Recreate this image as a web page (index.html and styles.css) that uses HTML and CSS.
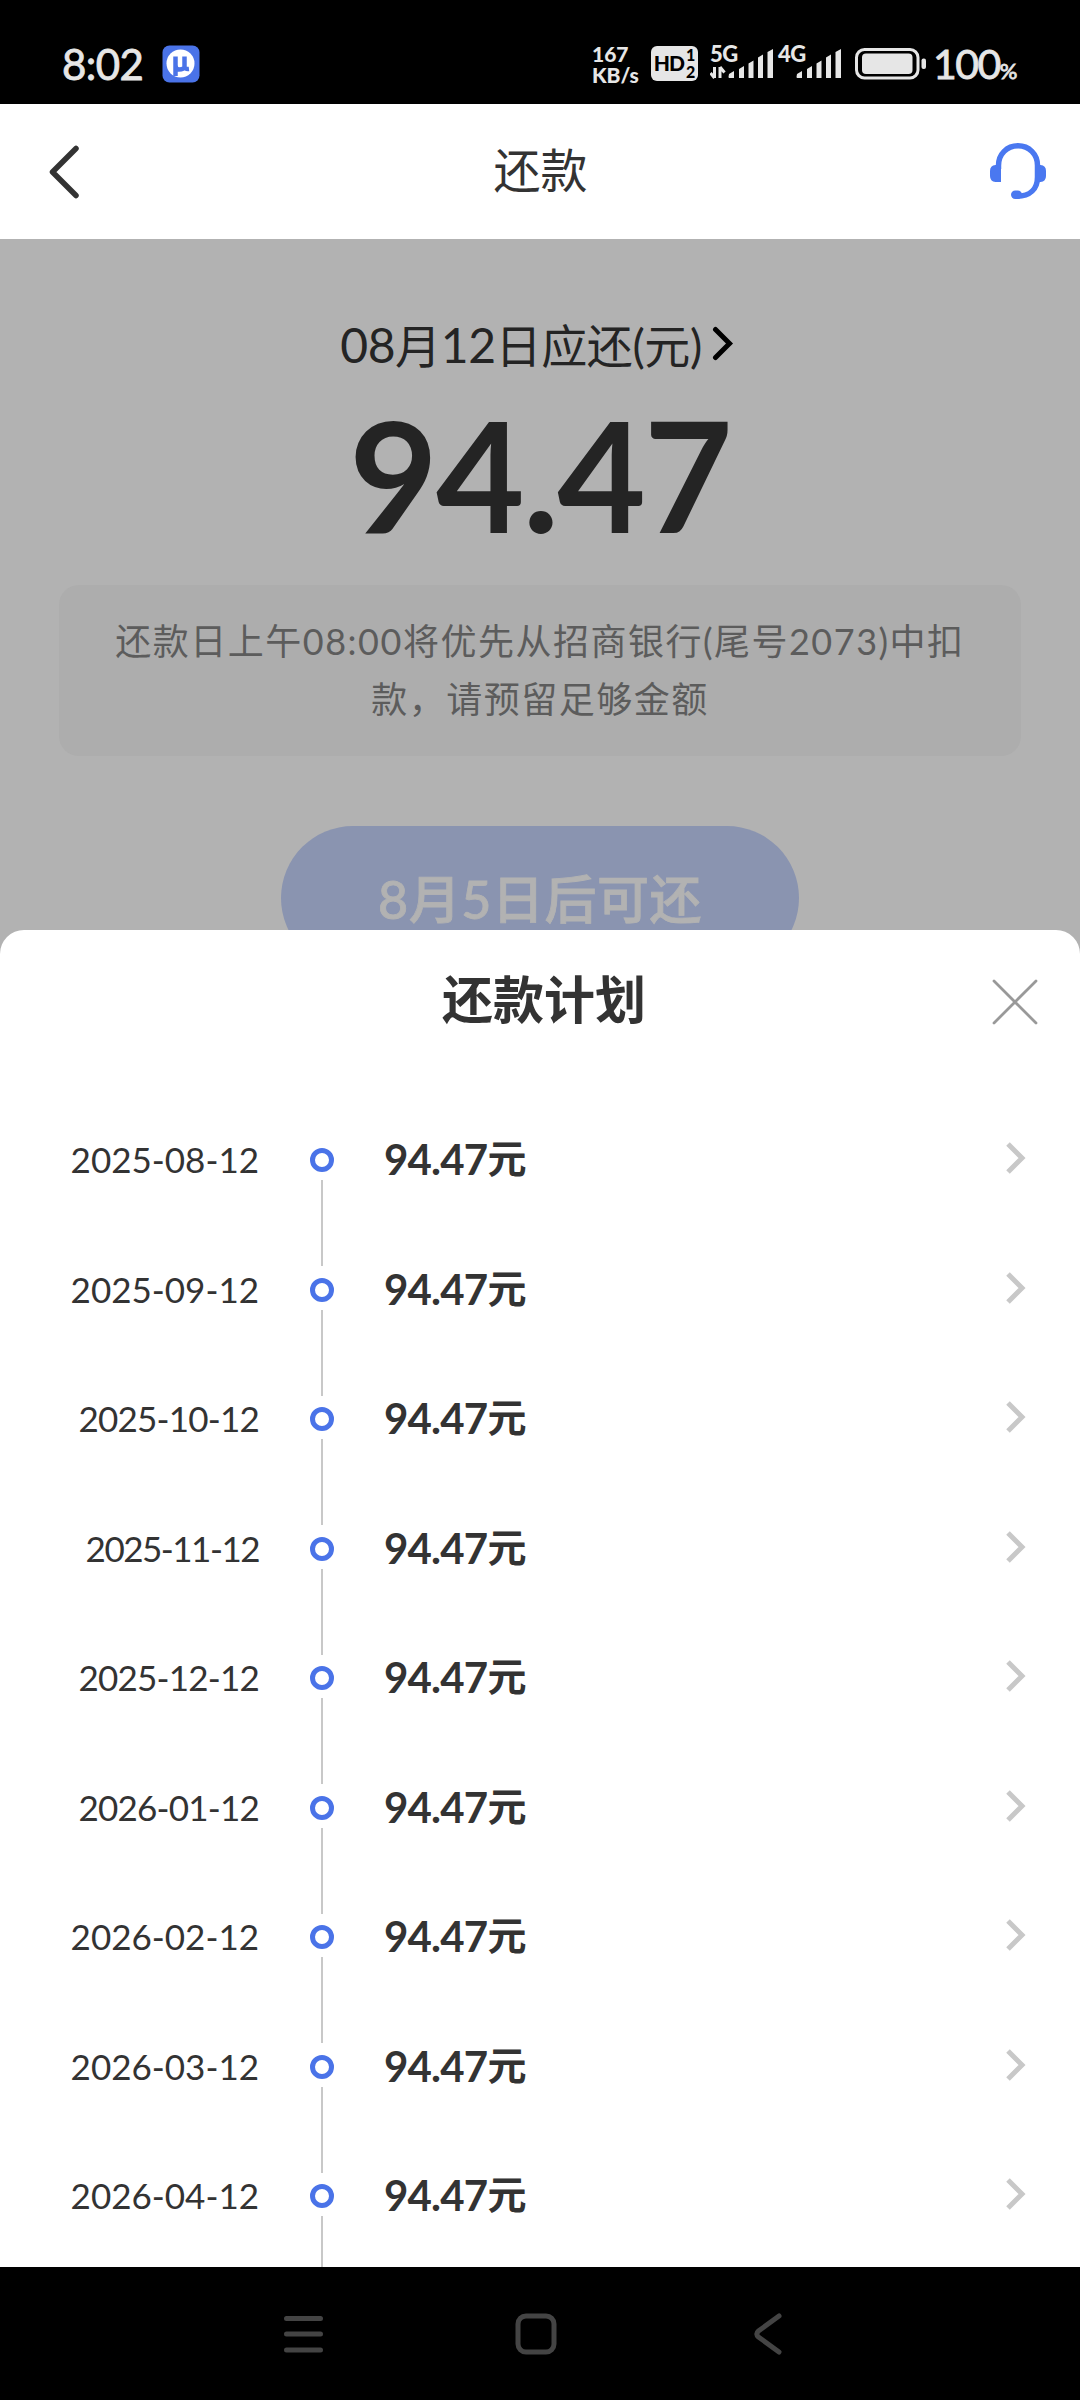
FILE: index.html
```html
<!DOCTYPE html>
<html lang="zh-CN">

<head>
  <meta charset="UTF-8">
  <title>还款</title>
  <link rel="stylesheet" href="styles.css">
</head>

<body>
  <div class="phone">
    <div class="status-bar">
      <div class="time">8:02</div>
      <svg class="app-icon" width="38" height="38" viewBox="0 0 38 38">
        <rect x="0.5" y="0.5" width="37" height="37" rx="7" fill="#4a73e8" />
        <circle cx="18.5" cy="18.5" r="14" fill="#fff" />
        <path d="M13.500 11.500V31M13.500 20Q13.500 24.500 17 24.500Q21.500 24.500 22.500 22M22.500 11.500V21Q22.500 24.500 27 24" fill="none" stroke="#4a73e8" stroke-width="4.500" />
      </svg>
      <div class="speed">
        <div>167</div>
        <div>KB/s</div>
      </div>
      <div class="hd">
        <div class="hd-text">HD</div>
        <div class="hd-num">
          <div>1</div>
          <div>2</div>
        </div>
      </div>
      <div class="signal">
        <div class="net">5G</div>
        <svg width="65" height="36" viewBox="0 0 65 36" fill="#e6e6e6">
          <path d="M4.500 22V33M4.500 33L0.500 28M10 33V22M10 22L14.500 27.500" fill="none" stroke="#e6e6e6" stroke-width="3" />
          <path d="M19 29l5-3v7h-4.500q-1 0-1-1zM29 24l5-3v12h-5zM38.500 18.500l5-3v17.500h-5zM48 12.500l5-3v23.500h-5zM57.500 7l5.500-3v29h-5.500z" />
        </svg>
      </div>
      <div class="signal signal-2">
        <div class="net">4G</div>
        <svg width="65" height="36" viewBox="0 0 65 36" fill="#e6e6e6">
          <path d="M19 29l5-3v7h-4.500q-1 0-1-1zM29 24l5-3v12h-5zM38.500 18.500l5-3v17.500h-5zM48 12.500l5-3v23.500h-5zM57.500 7l5.500-3v29h-5.500z" />
        </svg>
      </div>
      <svg class="battery" width="72" height="32" viewBox="0 0 72 32">
        <rect x="1.500" y="1.500" width="61.500" height="28.500" rx="8" fill="none" stroke="#e6e6e6" stroke-width="3" />
        <rect x="7" y="5.500" width="50.500" height="20.500" rx="4" fill="#e6e6e6" />
        <rect x="66.500" y="10.500" width="4.500" height="10.500" rx="2" fill="#e6e6e6" />
      </svg>
      <div class="percent">100<span>%</span></div>
    </div>

    <div class="header">
      <svg class="back" width="36" height="56" viewBox="0 0 36 56">
        <path d="M31 4.500L7.500 28L31 51.500" fill="none" stroke="#333" stroke-width="5.500" stroke-linecap="round" stroke-linejoin="round" />
      </svg>
      <div class="header-title">还款</div>
      <svg class="service" width="56" height="56" viewBox="0 0 56 56">
        <path d="M8.500 26V22.500C8.500 11 17 2.800 28 2.800S47.500 11 47.500 22.500V34C47.500 46 40 53.200 27 53.200" fill="none" stroke="#4a78f0" stroke-width="5.500" />
        <path d="M11 22V39H5.500Q0 38.500 0 33V28Q0 22.500 5.500 22zM45 22H50.500Q56 22.500 56 28V33Q56 38.500 50.500 39H45z" fill="#4a78f0" />
        <rect x="21" y="47.500" width="11" height="8.500" rx="4.200" fill="#4a78f0" />
      </svg>
    </div>

    <div class="content">
      <div class="due">
        <div class="due-text"><b>08</b>月<b>12</b>日应还(元)</div>
        <svg width="22" height="36" viewBox="0 0 22 36">
          <path d="M3.500 3.500L17.500 17.500L3.500 31.500" fill="none" stroke="#000" stroke-width="5" stroke-linecap="round" />
        </svg>
      </div>
      <div class="total">94.47</div>
      <div class="notice">还款日上午08:00将优先从招商银行(尾号2073)中扣<br>款，请预留足够金额</div>
      <div class="pay-btn">8月5日后可还</div>
    </div>

    <div class="sheet">
      <div class="sheet-header">
        <div class="sheet-title">还款计划</div>
        <svg class="close" width="46" height="46" viewBox="0 0 46 46">
          <path d="M2 2L44 44M44 2L2 44" stroke="#999" stroke-width="2.800" stroke-linecap="round" />
        </svg>
      </div>
      <div class="plan">
        <div class="item">
          <div class="date">2025-08-12</div>
          <div class="track"></div>
          <div class="amount">94.47<span>元</span></div>
          <svg class="arrow" viewBox="0 0 20 32"><path d="M2 2L16 16L2 30" /></svg>
        </div>
        <div class="item">
          <div class="date">2025-09-12</div>
          <div class="track"></div>
          <div class="amount">94.47<span>元</span></div>
          <svg class="arrow" viewBox="0 0 20 32"><path d="M2 2L16 16L2 30" /></svg>
        </div>
        <div class="item">
          <div class="date tight">2025-10-12</div>
          <div class="track"></div>
          <div class="amount">94.47<span>元</span></div>
          <svg class="arrow" viewBox="0 0 20 32"><path d="M2 2L16 16L2 30" /></svg>
        </div>
        <div class="item">
          <div class="date tighter">2025-11-12</div>
          <div class="track"></div>
          <div class="amount">94.47<span>元</span></div>
          <svg class="arrow" viewBox="0 0 20 32"><path d="M2 2L16 16L2 30" /></svg>
        </div>
        <div class="item">
          <div class="date tight">2025-12-12</div>
          <div class="track"></div>
          <div class="amount">94.47<span>元</span></div>
          <svg class="arrow" viewBox="0 0 20 32"><path d="M2 2L16 16L2 30" /></svg>
        </div>
        <div class="item">
          <div class="date tight">2026-01-12</div>
          <div class="track"></div>
          <div class="amount">94.47<span>元</span></div>
          <svg class="arrow" viewBox="0 0 20 32"><path d="M2 2L16 16L2 30" /></svg>
        </div>
        <div class="item">
          <div class="date">2026-02-12</div>
          <div class="track"></div>
          <div class="amount">94.47<span>元</span></div>
          <svg class="arrow" viewBox="0 0 20 32"><path d="M2 2L16 16L2 30" /></svg>
        </div>
        <div class="item">
          <div class="date">2026-03-12</div>
          <div class="track"></div>
          <div class="amount">94.47<span>元</span></div>
          <svg class="arrow" viewBox="0 0 20 32"><path d="M2 2L16 16L2 30" /></svg>
        </div>
        <div class="item">
          <div class="date">2026-04-12</div>
          <div class="track"></div>
          <div class="amount">94.47<span>元</span></div>
          <svg class="arrow" viewBox="0 0 20 32"><path d="M2 2L16 16L2 30" /></svg>
        </div>
      </div>
    </div>

    <div class="nav-bar">
      <svg width="42" height="42" viewBox="0 0 42 42">
        <path d="M3.500 5.500H37.500M3.500 21H37.500M3.500 37H37.500" />
      </svg>
      <svg width="42" height="42" viewBox="0 0 42 42">
        <rect x="3" y="3" width="36" height="36" rx="8" />
      </svg>
      <svg width="42" height="42" viewBox="0 0 42 42">
        <path d="M32 3L11.500 18Q8 21 11.500 24L32 39" />
      </svg>
    </div>
  </div>
</body>

</html>
```
FILE: styles.css
```css
body {
  margin: 0;
  font-family: Lato, "Noto Sans CJK SC", sans-serif;
  color: #333;
}

svg {
  display: block;
  flex-shrink: 0;
}

.phone {
  width: 1080px;
  height: 2400px;
  display: flex;
  flex-direction: column;
  overflow: hidden;
  background: #b2b2b2;
}

/* status bar */
.status-bar {
  height: 104px;
  box-sizing: border-box;
  padding: 45px 0 0 62px;
  display: flex;
  align-items: flex-start;
  flex-shrink: 0;
  background: #000;
  color: #e6e6e6;
}

.time {
  width: 100px;
  font-size: 42px;
  line-height: 38px;
  letter-spacing: -0.6px;
  -webkit-text-stroke: 0.8px #e6e6e6;
}

.speed {
  width: 59px;
  margin-left: 392px;
  font-size: 21px;
  font-weight: 900;
  line-height: 21px;
  margin-top: -2px;
}

.hd {
  width: 47px;
  height: 35px;
  margin-top: 1px;
  border-radius: 6px;
  background: #e6e6e6;
  color: #000;
  display: flex;
  justify-content: center;
  font-weight: 900;
}

.hd-text {
  font-size: 21px;
  line-height: 34px;
  letter-spacing: -1px;
}

.hd-num {
  margin-left: 2px;
  font-size: 16px;
  line-height: 17px;
}

.signal {
  width: 65px;
  height: 36px;
  margin-left: 12px;
  display: grid;
}

.signal > * {
  grid-area: 1 / 1;
}

.net {
  font-size: 22px;
  font-weight: 900;
  line-height: 17px;
  letter-spacing: -0.5px;
}

.signal-2 {
  margin-left: 3px;
}

.battery {
  margin: 3px 0 0 12px;
}

.percent {
  margin-left: 6px;
  font-size: 41px;
  line-height: 38px;
  letter-spacing: -1.5px;
  white-space: nowrap;
  -webkit-text-stroke: 0.8px #e6e6e6;
}

.percent span {
  font-size: 22px;
  letter-spacing: 0;
}

/* header */
.header {
  height: 135px;
  box-sizing: border-box;
  padding: 0 34px 0 46px;
  display: flex;
  align-items: center;
  justify-content: space-between;
  flex-shrink: 0;
  background: #fff;
}

.back {
  margin-right: 10px;
  margin-left: -1px;
}

.header-title {
  padding-bottom: 4px;
  font-size: 47px;
  line-height: 60px;
}

.service {
  margin-top: -1px;
}

/* dimmed page */
.content {
  height: 691px;
  flex-shrink: 0;
  overflow: hidden;
  color: #242424;
}

.due {
  height: 60px;
  margin-top: 76px;
  padding-right: 6px;
  display: flex;
  align-items: center;
  justify-content: center;
  gap: 10px;
}

.due svg {
  margin-top: -3px;
}

.due-text {
  font-size: 46px;
  line-height: 60px;
  letter-spacing: -0.4px;
}

.due-text b {
  font-weight: 400;
  font-size: 48px;
}

.total {
  height: 150px;
  margin-top: 24px;
  font-size: 153px;
  font-weight: 700;
  line-height: 150px;
  letter-spacing: -2px;
  text-align: center;
}

.notice {
  width: 962px;
  height: 171px;
  box-sizing: border-box;
  margin: 36px auto 0;
  padding-top: 27px;
  border-radius: 20px;
  background: #adadad;
  color: #5c5c5c;
  font-size: 36px;
  line-height: 58px;
  letter-spacing: 1.5px;
  text-align: center;
  white-space: nowrap;
}

.pay-btn {
  width: 518px;
  height: 144px;
  margin: 70px auto 0;
  border-radius: 72px;
  background: #8a94b0;
  color: #b2b2b2;
  font-size: 52px;
  font-weight: 500;
  line-height: 147px;
  letter-spacing: 0.5px;
  text-align: center;
  -webkit-text-stroke: 0.8px #b2b2b2;
}

/* bottom sheet */
.sheet {
  flex: 1;
  min-height: 0;
  display: flex;
  flex-direction: column;
  border-radius: 24px 24px 0 0;
  background: #fff;
}

.sheet-header {
  height: 144px;
  padding: 0 42px 0 96px;
  display: flex;
  align-items: center;
  flex-shrink: 0;
}

.sheet-title {
  flex: 1;
  padding-bottom: 4px;
  font-size: 51px;
  font-weight: 700;
  line-height: 60px;
  text-align: center;
}

.plan {
  flex: 1;
  min-height: 0;
  padding: 74px 54px 0 0;
  overflow: hidden;
}

.item {
  height: 129.5px;
  display: flex;
  line-height: 24px;
}

.date {
  width: 259px;
  margin-top: -1px;
  font-size: 35px;
  text-align: right;
}

/* dates with more 1s run shorter */
.tight {
  letter-spacing: -0.8px;
}

.tighter {
  letter-spacing: -1.5px;
}

.track {
  width: 24px;
  margin: 0 50px 0 51px;
}

.track::before {
  content: "";
  display: block;
  box-sizing: border-box;
  width: 24px;
  height: 24px;
  border: 5px solid #4a73e8;
  border-radius: 50%;
}

.track::after {
  content: "";
  display: block;
  width: 2px;
  height: 86px;
  margin: 8px auto 0;
  background: #c8c8c8;
}

.amount {
  flex: 1;
  margin-top: -2px;
  font-size: 42px;
  font-weight: 700;
  letter-spacing: -0.8px;
}

.amount span {
  font-size: 39px;
  vertical-align: 2px;
}

.arrow {
  width: 20px;
  height: 32px;
  margin-top: -6px;
  fill: none;
  stroke: #c8c8c8;
  stroke-width: 5;
}

/* system navigation */
.nav-bar {
  height: 133px;
  box-sizing: border-box;
  padding-right: 9px;
  display: flex;
  align-items: center;
  justify-content: center;
  gap: 190px;
  flex-shrink: 0;
  background: #000;
}

.nav-bar svg {
  fill: none;
  stroke: #444;
  stroke-width: 5;
  stroke-linecap: round;
}
```
